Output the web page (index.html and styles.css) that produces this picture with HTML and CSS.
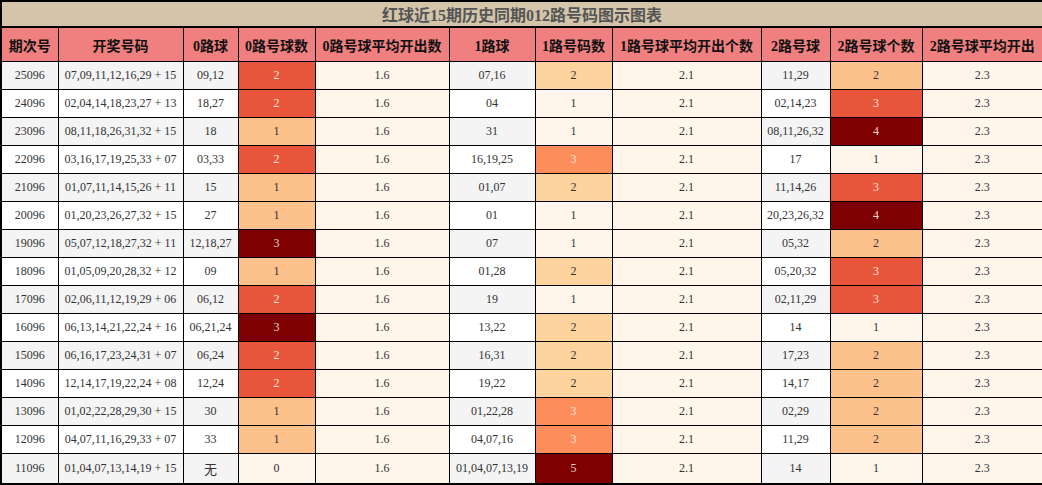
FILE: index.html
```html
<!DOCTYPE html>
<html lang="zh">
<head>
<meta charset="utf-8">
<link rel="stylesheet" href="styles.css">
</head>
<body>
<table class="chart">
<colgroup>
<col class="c-period"><col class="c-nums"><col class="c-r0"><col class="c-n0"><col class="c-a0"><col class="c-r1"><col class="c-n1"><col class="c-a1"><col class="c-r2"><col class="c-n2"><col class="c-a2">
</colgroup>
<thead>
<tr class="title-row"><th colspan="11" class="title">红球近15期历史同期012路号码图示图表</th></tr>
<tr class="head-row">
<th>期次号</th><th>开奖号码</th><th>0路球</th><th>0路号球数</th><th>0路号球平均开出数</th><th>1路球</th><th>1路号码数</th><th>1路号球平均开出个数</th><th>2路号球</th><th>2路号球个数</th><th>2路号球平均开出</th>
</tr>
</thead>
<tbody>
<tr class="odd"><td class="g">25096</td><td class="g">07,09,11,12,16,29 + 15</td><td class="g">09,12</td><td class="h-red">2</td><td class="avg">1.6</td><td class="g">07,16</td><td class="h-pale">2</td><td class="avg">2.1</td><td class="g">11,29</td><td class="h-light">2</td><td class="avg">2.3</td></tr>
<tr class="even"><td class="g">24096</td><td class="g">02,04,14,18,23,27 + 13</td><td class="g">18,27</td><td class="h-red">2</td><td class="avg">1.6</td><td class="g">04</td><td class="h-none">1</td><td class="avg">2.1</td><td class="g">02,14,23</td><td class="h-red">3</td><td class="avg">2.3</td></tr>
<tr class="odd"><td class="g">23096</td><td class="g">08,11,18,26,31,32 + 15</td><td class="g">18</td><td class="h-light">1</td><td class="avg">1.6</td><td class="g">31</td><td class="h-none">1</td><td class="avg">2.1</td><td class="g">08,11,26,32</td><td class="h-dark">4</td><td class="avg">2.3</td></tr>
<tr class="even"><td class="g">22096</td><td class="g">03,16,17,19,25,33 + 07</td><td class="g">03,33</td><td class="h-red">2</td><td class="avg">1.6</td><td class="g">16,19,25</td><td class="h-orange">3</td><td class="avg">2.1</td><td class="g">17</td><td class="h-none">1</td><td class="avg">2.3</td></tr>
<tr class="odd"><td class="g">21096</td><td class="g">01,07,11,14,15,26 + 11</td><td class="g">15</td><td class="h-light">1</td><td class="avg">1.6</td><td class="g">01,07</td><td class="h-pale">2</td><td class="avg">2.1</td><td class="g">11,14,26</td><td class="h-red">3</td><td class="avg">2.3</td></tr>
<tr class="even"><td class="g">20096</td><td class="g">01,20,23,26,27,32 + 15</td><td class="g">27</td><td class="h-light">1</td><td class="avg">1.6</td><td class="g">01</td><td class="h-none">1</td><td class="avg">2.1</td><td class="g">20,23,26,32</td><td class="h-dark">4</td><td class="avg">2.3</td></tr>
<tr class="odd"><td class="g">19096</td><td class="g">05,07,12,18,27,32 + 11</td><td class="g">12,18,27</td><td class="h-dark">3</td><td class="avg">1.6</td><td class="g">07</td><td class="h-none">1</td><td class="avg">2.1</td><td class="g">05,32</td><td class="h-light">2</td><td class="avg">2.3</td></tr>
<tr class="even"><td class="g">18096</td><td class="g">01,05,09,20,28,32 + 12</td><td class="g">09</td><td class="h-light">1</td><td class="avg">1.6</td><td class="g">01,28</td><td class="h-pale">2</td><td class="avg">2.1</td><td class="g">05,20,32</td><td class="h-red">3</td><td class="avg">2.3</td></tr>
<tr class="odd"><td class="g">17096</td><td class="g">02,06,11,12,19,29 + 06</td><td class="g">06,12</td><td class="h-red">2</td><td class="avg">1.6</td><td class="g">19</td><td class="h-none">1</td><td class="avg">2.1</td><td class="g">02,11,29</td><td class="h-red">3</td><td class="avg">2.3</td></tr>
<tr class="even"><td class="g">16096</td><td class="g">06,13,14,21,22,24 + 16</td><td class="g">06,21,24</td><td class="h-dark">3</td><td class="avg">1.6</td><td class="g">13,22</td><td class="h-pale">2</td><td class="avg">2.1</td><td class="g">14</td><td class="h-none">1</td><td class="avg">2.3</td></tr>
<tr class="odd"><td class="g">15096</td><td class="g">06,16,17,23,24,31 + 07</td><td class="g">06,24</td><td class="h-red">2</td><td class="avg">1.6</td><td class="g">16,31</td><td class="h-pale">2</td><td class="avg">2.1</td><td class="g">17,23</td><td class="h-light">2</td><td class="avg">2.3</td></tr>
<tr class="even"><td class="g">14096</td><td class="g">12,14,17,19,22,24 + 08</td><td class="g">12,24</td><td class="h-red">2</td><td class="avg">1.6</td><td class="g">19,22</td><td class="h-pale">2</td><td class="avg">2.1</td><td class="g">14,17</td><td class="h-light">2</td><td class="avg">2.3</td></tr>
<tr class="odd"><td class="g">13096</td><td class="g">01,02,22,28,29,30 + 15</td><td class="g">30</td><td class="h-light">1</td><td class="avg">1.6</td><td class="g">01,22,28</td><td class="h-orange">3</td><td class="avg">2.1</td><td class="g">02,29</td><td class="h-light">2</td><td class="avg">2.3</td></tr>
<tr class="even"><td class="g">12096</td><td class="g">04,07,11,16,29,33 + 07</td><td class="g">33</td><td class="h-light">1</td><td class="avg">1.6</td><td class="g">04,07,16</td><td class="h-orange">3</td><td class="avg">2.1</td><td class="g">11,29</td><td class="h-light">2</td><td class="avg">2.3</td></tr>
<tr class="odd last"><td class="g">11096</td><td class="g">01,04,07,13,14,19 + 15</td><td class="g cjk">无</td><td class="h-none">0</td><td class="avg">1.6</td><td class="g">01,04,07,13,19</td><td class="h-dark">5</td><td class="avg">2.1</td><td class="g">14</td><td class="h-none">1</td><td class="avg">2.3</td></tr>
</tbody>
</table>
</body>
</html>
```

FILE: styles.css
```css
html, body {
  margin: 0;
  padding: 0;
  background: #ffffff;
}

.chart {
  width: 1042px;
  border-collapse: collapse;
  table-layout: fixed;
  border: 2px solid #000;
  font-family: "Liberation Serif", "Noto Sans CJK SC", serif;
  font-size: 12px;
  color: #333;
}

.c-period { width: 57px; }
.c-nums { width: 125px; }
.c-r0 { width: 55px; }
.c-n0 { width: 77px; }
.c-a0 { width: 134px; }
.c-r1 { width: 86px; }
.c-n1 { width: 77px; }
.c-a1 { width: 149px; }
.c-r2 { width: 69px; }
.c-n2 { width: 92px; }
.c-a2 { width: 121px; }

.chart th,
.chart td {
  border: 1px solid #000;
  padding: 0;
  text-align: center;
  vertical-align: middle;
  white-space: nowrap;
  overflow: hidden;
}

.title-row th.title {
  height: 23px;
  background: #d4c5aa;
  color: #555;
  font-size: 16px;
  font-weight: bold;
  border-bottom: 2px solid #000;
  font-family: "Liberation Serif", "Noto Sans CJK SC", serif;
}

.head-row th {
  height: 33px;
  background: #f08080;
  color: #111;
  font-size: 14px;
  font-weight: bold;
}

.chart tbody td {
  height: 27px;
}

.chart tbody tr.last td {
  height: 29px;
}

.odd td.g { background: #f4f4f4; }
.even td.g { background: #ffffff; }

.cjk {
  font-family: "Noto Sans CJK SC", sans-serif;
  font-size: 13px;
}

td.avg { background: #fff5ea; }

td.h-none { background: #fff5ea; }
td.h-pale { background: #fdd49e; }
td.h-light { background: #fdc18b; }
td.h-orange { background: #fd8d5a; color: #f3e3dc; }
td.h-red { background: #e7553b; color: #f7e3de; }
td.h-dark { background: #7f0000; color: #e9d3d3; }
```
